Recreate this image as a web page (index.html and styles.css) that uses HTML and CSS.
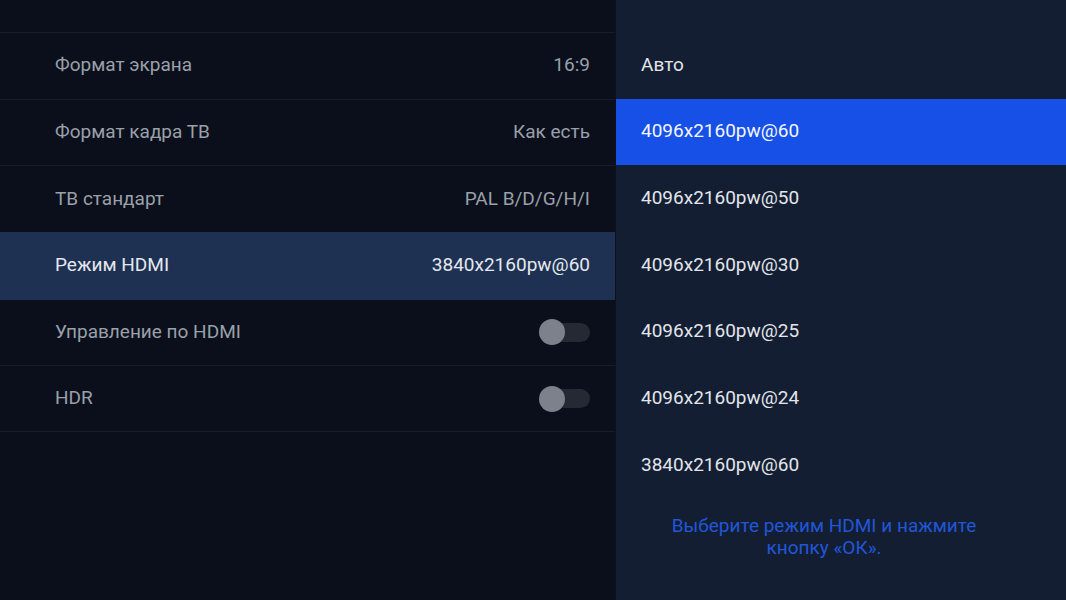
FILE: index.html
```html
<!DOCTYPE html>
<html lang="ru">
<head>
<meta charset="utf-8">
<link rel="stylesheet" href="styles.css">
</head>
<body>
<div class="screen">
  <section class="settings">
    <div class="row"><span class="label">Формат экрана</span><span class="value">16:9</span></div>
    <div class="row"><span class="label">Формат кадра ТВ</span><span class="value">Как есть</span></div>
    <div class="row"><span class="label">ТВ стандарт</span><span class="value">PAL B/D/G/H/I</span></div>
    <div class="row active"><span class="label">Режим HDMI</span><span class="value">3840x2160pw@60</span></div>
    <div class="row"><span class="label">Управление по HDMI</span><span class="toggle"><span class="knob"></span></span></div>
    <div class="row"><span class="label">HDR</span><span class="toggle"><span class="knob"></span></span></div>
  </section>
  <section class="options">
    <div class="list">
      <div class="opt">Авто</div>
      <div class="opt selected">4096x2160pw@60</div>
      <div class="opt">4096x2160pw@50</div>
      <div class="opt">4096x2160pw@30</div>
      <div class="opt">4096x2160pw@25</div>
      <div class="opt">4096x2160pw@24</div>
      <div class="opt">3840x2160pw@60</div>
    </div>
    <p class="hint">Выберите режим HDMI и нажмите<br>кнопку «ОК».</p>
  </section>
</div>
</body>
</html>
```
FILE: styles.css
```css
* { box-sizing: border-box; }
html, body { margin: 0; padding: 0; }
body {
  width: 1066px;
  height: 600px;
  overflow: hidden;
  background: #0a0f1b;
  font-family: Roboto, "Noto Sans", sans-serif;
}
.screen {
  display: flex;
  width: 1066px;
  height: 600px;
}
.settings {
  width: 616px;
  height: 600px;
  background: #0a0f1b;
  padding-top: 32px;
  border-right: 1px solid #0c111d;
}
.row {
  height: 66.67px;
  border-top: 1px solid #171d29;
  display: flex;
  align-items: center;
  justify-content: space-between;
  padding: 0 25px 2px 55px;
  font-size: 19px;
  color: #9aa0a9;
}
.row:last-child { border-bottom: 1px solid #171d29; }
.row.active {
  background: #1e3152;
  border-top-color: #1e3152;
  color: #e4e8ee;
}
.row.active + .row { border-top-color: #1e3152; }
.toggle {
  position: relative;
  width: 50px;
  height: 19px;
  border-radius: 10px;
  background: #242934;
  margin-top: 2px;
}
.knob {
  position: absolute;
  left: -1px;
  top: -3.5px;
  width: 26px;
  height: 26px;
  border-radius: 50%;
  background: #7c818b;
}
.options {
  flex: 1;
  height: 600px;
  background: #131e33;
  padding-top: 32px;
  display: flex;
  flex-direction: column;
}
.opt {
  height: 66.67px;
  display: flex;
  align-items: center;
  padding: 0 0 2px 25px;
  font-size: 19px;
  color: #e2e5ea;
}
.opt.selected {
  background: #1650e6;
  color: #f2f5fb;
}
.hint {
  margin: 16px 0 0 0;
  padding-right: 34px;
  text-align: center;
  font-size: 19px;
  line-height: 22px;
  color: #2156d8;
}
```
